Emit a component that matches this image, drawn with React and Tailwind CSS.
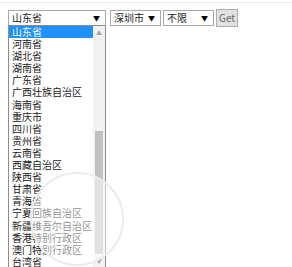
import React from "react";

const provinces = [
  "山东省", "河南省", "湖北省", "湖南省", "广东省", "广西壮族自治区", "海南省",
  "重庆市", "四川省", "贵州省", "云南省", "西藏自治区", "陕西省", "甘肃省",
  "青海省", "宁夏回族自治区", "新疆维吾尔自治区", "香港特别行政区", "澳门特别行政区", "台湾省",
];

// Fake closed select box
const SelectBox = ({ label, width, extra = "" }) => (
  <div
    className={`flex items-center justify-between h-[16px] border border-[#a9a9a9] bg-white pl-[3px] pr-[5px] ${width} ${extra}`}
  >
    <span className="leading-none text-[#222]">{label}</span>
    <span className="text-[7px] leading-none text-black">▼</span>
  </div>
);

const App = () => {
  return (
    <div
      className="relative w-[292px] h-[267px] overflow-hidden bg-white text-[10px]"
      style={{ fontFamily: '"Noto Sans CJK SC", "Noto Sans", sans-serif' }}
    >
      <div className="h-[3px] border-b border-[#ececec]" />

      {/* Form row */}
      <div className="flex items-center gap-[2px] pl-[8px] pt-[6px]">
        <SelectBox label="山东省" width="w-[98px]" />
        <SelectBox label="深圳市" width="w-[51px]" extra="ml-[2px]" />
        <SelectBox label="不限" width="w-[51px]" />
        <button className="h-[18px] px-[2px] bg-[#e1e1e1] border border-[#adadad] text-[10px] leading-none text-[#666]">
          Get
        </button>
      </div>

      {/* Open dropdown list */}
      <div className="absolute left-[8px] top-[25px] w-[98px] h-[250px] border border-[#8c8c8c] bg-white">
        <div className="flex flex-col">
          {provinces.map((p, i) => (
            <div
              key={p}
              className={`h-[12.1px] pl-[3px] leading-[12px] whitespace-nowrap ${
                i === 0 ? "bg-[#1e90ff] text-white" : "text-[#222]"
              }`}
            >
              {p}
            </div>
          ))}
        </div>

        {/* Scrollbar */}
        <div className="absolute right-0 top-0 bottom-0 w-[12px] bg-[#f1f1f1] flex flex-col items-center">
          <div className="h-[12px] flex items-center justify-center text-[6px] text-[#a3a3a3]">▲</div>
          <div className="mt-[93px] w-[8px] h-[123px] bg-[#c1c1c1]" />
          <div className="h-[12px] flex items-center justify-center text-[6px] text-[#a3a3a3]">▼</div>
        </div>
      </div>

      {/* Watermark circle */}
      <div className="absolute left-[30px] top-[172px] w-[94px] h-[94px] rounded-full border-2 border-[#ebebeb] bg-white/50" />
    </div>
  );
};

export default App;
